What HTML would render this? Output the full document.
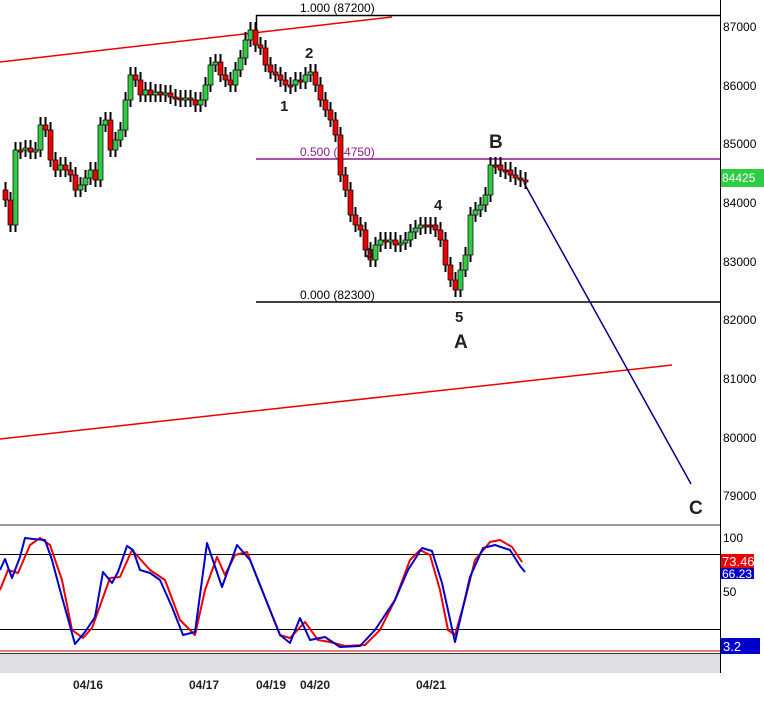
<!DOCTYPE html>
<html><head><meta charset="utf-8"><style>
html,body{margin:0;padding:0;background:#fff;}
body{width:764px;height:701px;overflow:hidden;font-family:"Liberation Sans",Arial,sans-serif;}
svg text{font-family:"Liberation Sans",Arial,sans-serif;}
</style></head><body>
<svg id="s" width="764" height="701" xmlns="http://www.w3.org/2000/svg">
<rect width="764" height="701" fill="#fff"/>
<line x1="720.5" y1="0" x2="720.5" y2="673" stroke="#000"/>
<line x1="0" y1="525" x2="720" y2="525" stroke="#999" stroke-width="2"/>
<g font-size="12" fill="#000">
<text x="723" y="31">87000</text>
<text x="723" y="90">86000</text>
<text x="723" y="148">85000</text>
<text x="723" y="207">84000</text>
<text x="723" y="266">83000</text>
<text x="723" y="324">82000</text>
<text x="723" y="383">81000</text>
<text x="723" y="442">80000</text>
<text x="723" y="500">79000</text>
</g>
<rect x="721" y="169" width="43" height="18" fill="#2ecc40"/>
<text x="722" y="182" font-size="12" fill="#fff">84425</text>
<line x1="0" y1="62" x2="392" y2="17" stroke="#e00" stroke-width="1.5"/>
<line x1="0" y1="439" x2="672" y2="365" stroke="#e00" stroke-width="1.5"/>
<line x1="256" y1="15.5" x2="720" y2="15.5" stroke="#000" stroke-width="1.5"/>
<line x1="256.5" y1="15" x2="256.5" y2="45" stroke="#000" stroke-width="1.5"/>
<text x="300" y="12" font-size="12">1.000 (87200)</text>
<line x1="256" y1="159" x2="720" y2="159" stroke="#8b1a8b" stroke-width="1.5"/>
<text x="300" y="156" font-size="12" fill="#8b1a8b">0.500 (84750)</text>
<line x1="256" y1="302" x2="720" y2="302" stroke="#000" stroke-width="1.5"/>
<text x="300" y="299" font-size="12">0.000 (82300)</text>
<line x1="524" y1="183" x2="691" y2="484" stroke="#00008b" stroke-width="1.5"/>
<g id="candles"></g>
<g font-weight="bold" fill="#222">
<text x="280" y="111" font-size="15">1</text>
<text x="305" y="58" font-size="15">2</text>
<text x="365" y="258" font-size="15">3</text>
<text x="434" y="210" font-size="15">4</text>
<text x="455" y="322" font-size="15">5</text>
<text x="454" y="348" font-size="19">A</text>
<text x="489" y="148" font-size="19">B</text>
<text x="689" y="514" font-size="19">C</text>
</g>
<line x1="0" y1="554.5" x2="720" y2="554.5" stroke="#000"/>
<line x1="0" y1="629.5" x2="720" y2="629.5" stroke="#000"/>
<line x1="0" y1="651" x2="720" y2="651" stroke="#c00"/>
<rect x="0" y="654" width="720" height="19" fill="#e0e0e4"/>
<line x1="0" y1="653.5" x2="720" y2="653.5" stroke="#333"/>
<polyline fill="none" stroke="#e00" stroke-width="2" stroke-linejoin="round" points="0,590 8,570 18,573 30,545 40,538 50,545 62,580 72,630 83,638 92,628 110,578 120,577 132,550 150,570 165,580 180,620 195,635 205,590 217,557 225,575 235,555 247,552 260,585 280,635 290,638 305,622 318,640 330,642 345,646 365,645 380,630 395,600 410,560 420,550 430,555 440,590 448,630 455,635 465,600 475,560 490,542 500,540 512,547 522,562"/>
<polyline fill="none" stroke="#00c" stroke-width="2" stroke-linejoin="round" points="0,570 5,559 12,578 20,557 25,538 33,539 45,540 52,560 60,590 75,644 85,632 95,617 103,572 112,583 118,572 127,546 133,550 140,570 150,573 160,580 172,607 183,635 195,632 207,543 222,587 237,545 250,560 262,590 280,635 290,643 300,618 310,640 325,637 340,647 360,646 375,630 395,600 408,570 422,548 432,551 442,583 455,642 470,577 483,548 495,545 510,550 520,566 525,572"/>
<g font-size="12">
<text x="723" y="542">100</text>
<text x="723" y="596">50</text>
</g>
<rect x="721" y="554" width="33" height="14" fill="#e00"/>
<text x="722" y="566" font-size="13" fill="#fff">73.46</text>
<rect x="721" y="568" width="33" height="11" fill="#00c"/>
<text x="722" y="578" font-size="12" fill="#fff">66.23</text>
<rect x="721" y="638" width="39" height="16" fill="#00c"/>
<text x="723" y="651" font-size="13" fill="#fff">3.2</text>
<g font-size="12" font-weight="bold" fill="#222">
<text x="73" y="689">04/16</text>
<text x="189" y="689">04/17</text>
<text x="256" y="689">04/19</text>
<text x="300" y="689">04/20</text>
<text x="416" y="689">04/21</text>
</g>
</svg>
<script>
var ys=[190,200,225,150,150,148,152,150,125,130,160,170,165,170,175,190,185,178,170,180,125,120,150,140,130,100,75,80,95,90,95,92,95,93,97,98,100,98,100,105,100,85,65,62,75,80,85,70,58,40,30,45,48,65,72,75,80,85,85,80,82,75,72,85,100,110,120,135,175,190,215,225,230,250,260,245,240,242,240,245,243,240,232,228,225,225,225,230,240,265,280,290,270,255,215,210,205,195,165,165,170,170,175,178,180,180];
var g=document.getElementById('candles'),h='';
for(var i=1;i<ys.length;i++){var x=i*5;var o=ys[i-1],c=ys[i];var t=Math.min(o,c),b=Math.max(o,c);if(b-t<2){b=t+2;}
var up=c<o;var col=up?'#2ecc40':'#e00';
h+='<line x1="'+(x+.5)+'" y1="'+(t-8)+'" x2="'+(x+.5)+'" y2="'+(b+7)+'" stroke="#000" stroke-width="2"/>';
h+='<rect x="'+(x-2)+'" y="'+t+'" width="5" height="'+(b-t)+'" fill="'+col+'" stroke="#000" stroke-width="0.7"/>';}
g.innerHTML=h;
</script>
</body></html>
